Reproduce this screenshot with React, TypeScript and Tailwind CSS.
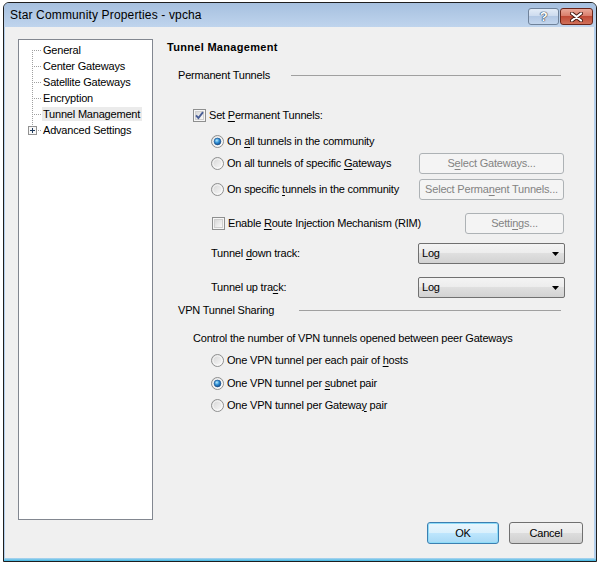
import React from "react";

const Key = ({ children }: { children: React.ReactNode }) => (
  <span className="underline underline-offset-[2px] decoration-[1px]">{children}</span>
);

const CheckBox = ({ checked }: { checked?: boolean }) => (
  <svg width="13" height="13" viewBox="0 0 13 13" className="shrink-0">
    <defs>
      <linearGradient id="cbfill" x1="0" y1="0" x2="1" y2="1">
        <stop offset="0" stopColor="#d6d6d6" />
        <stop offset="1" stopColor="#fbfbfb" />
      </linearGradient>
    </defs>
    <rect x="0.5" y="0.5" width="12" height="12" fill="#f6f6f6" stroke="#8e8f8f" />
    <rect x="2.5" y="2.5" width="8" height="8" fill="url(#cbfill)" stroke="#cfcfcf" />
    {checked && (
      <path d="M3 6.3 L5.4 9 L10 3.2" stroke="#4a5f97" strokeWidth="1.9" fill="none" />
    )}
  </svg>
);

const Radio = ({ checked }: { checked?: boolean }) => (
  <svg width="13" height="13" viewBox="0 0 13 13" className="shrink-0">
    <defs>
      <linearGradient id="rbfill" x1="0" y1="0" x2="1" y2="1">
        <stop offset="0" stopColor="#d2d2d2" />
        <stop offset="1" stopColor="#fdfdfd" />
      </linearGradient>
      <radialGradient id="rdot" cx="0.4" cy="0.35" r="0.75">
        <stop offset="0" stopColor="#b8ecff" />
        <stop offset="0.45" stopColor="#2f8fd6" />
        <stop offset="1" stopColor="#0a3b78" />
      </radialGradient>
    </defs>
    <circle cx="6.5" cy="6.5" r="6" fill="url(#rbfill)" stroke="#8e8f8f" />
    <circle cx="6.5" cy="6.5" r="4.6" fill="none" stroke="#ffffff" strokeOpacity="0.7" />
    {checked && <circle cx="6.5" cy="6.5" r="3.4" fill="url(#rdot)" stroke="#1b4f8a" strokeWidth="0.6" />}
  </svg>
);

const DisabledButton = ({ w, children }: { w: string; children: React.ReactNode }) => (
  <div
    className={`${w} h-[21px] mr-[1px] ml-auto rounded-[3px] border border-[#adb2b5] bg-[#f4f4f4] text-[#838383] flex items-center justify-center`}
  >
    {children}
  </div>
);

const Select = () => (
  <div className="ml-auto w-[147px] h-[21px] rounded-[2px] border border-[#707070] bg-[linear-gradient(#f4f4f4_0%,#ececec_50%,#dfdfdf_50%,#d2d2d2_100%)] flex items-center pl-[3px] pr-[5px]">
    <span>Log</span>
    <svg width="7" height="4" viewBox="0 0 7 4" className="ml-auto">
      <path d="M0 0 H7 L3.5 4 Z" fill="#000" />
    </svg>
  </div>
);

const treeItems = ["General", "Center Gateways", "Satellite Gateways", "Encryption", "Tunnel Management", "Advanced Settings"];

export default function App() {
  return (
    <div className="font-['Liberation_Sans',Arial,sans-serif] text-[11px] tracking-[-0.2px] text-black bg-white w-[600px] h-[565px] pt-[2px] pl-[3px]">
      <div className="w-[594px] h-[560px] border border-[#1e1e1e] rounded-t-[6px] bg-[#b4cfec] flex flex-col overflow-hidden">
        {/* title bar */}
        <div className="h-[24px] shrink-0 flex items-start pl-[6px] pr-[3px] bg-[linear-gradient(#a6c0df,#bfd4ed)]">
          <span className="text-[12px] tracking-[0.15px] leading-[16px] mt-[4px]">Star Community Properties - vpcha</span>
          <div className="ml-auto mt-[5px] flex gap-[1px]">
            <div className="w-[31px] h-[17px] rounded-[3px] border border-[#6f829a] bg-[linear-gradient(#e3ecf7_0%,#cbdaee_50%,#b3c8e4_50%,#c3d6ee_100%)] flex items-center justify-center">
              <span className="text-[13px] font-bold leading-none text-white [text-shadow:0_0_1px_#24384f,0_0_1px_#24384f,0_0_1px_#24384f]">?</span>
            </div>
            <div className="w-[33px] h-[17px] rounded-[3px] border border-[#6b2418] bg-[linear-gradient(#eaa898_0%,#d87a68_50%,#c04a36_50%,#d0705a_100%)] flex items-center justify-center">
              <svg width="13" height="10" viewBox="0 0 13 10">
                <path d="M2 1.5 L11 8.5 M11 1.5 L2 8.5" stroke="#4a1d14" strokeWidth="4" strokeLinecap="round" />
                <path d="M2 1.5 L11 8.5 M11 1.5 L2 8.5" stroke="#ffffff" strokeWidth="2.2" strokeLinecap="round" />
              </svg>
            </div>
          </div>
        </div>

        {/* client area */}
        <div className="flex-1 ml-[1px] mr-[2px] bg-[#f0f0f0] flex flex-col">
          <div className="flex pl-[13px] pt-[12px]">
            {/* tree */}
            <div className="relative w-[135px] h-[481px] shrink-0 border border-[#828790] bg-white pt-[2px]">
              <svg className="absolute left-0 top-0" width="30" height="100">
                <line x1="13.5" y1="10" x2="13.5" y2="87" stroke="#a0a0a0" strokeDasharray="1 1" />
                {[10, 26, 42, 58, 74].map((y) => (
                  <line key={y} x1="15" y1={y + 0.5} x2="23" y2={y + 0.5} stroke="#a0a0a0" strokeDasharray="1 1" />
                ))}
                <line x1="19" y1="90.5" x2="23" y2="90.5" stroke="#a0a0a0" strokeDasharray="1 1" />
                <rect x="9.5" y="86.5" width="8" height="8" fill="#f7f7f7" stroke="#919191" />
                <path d="M11 90.5 H16 M13.5 88 V93" stroke="#1f3a5c" />
              </svg>
              {treeItems.map((item) => (
                <div key={item} className="h-[16px] flex items-center pl-[23px]">
                  <span
                    className={
                      item === "Tunnel Management"
                        ? "pl-[1px] pr-[2px] h-[14px] leading-[14px] bg-[#ebebeb]"
                        : "pl-[1px] leading-[14px]"
                    }
                  >
                    {item}
                  </span>
                </div>
              ))}
            </div>

            {/* page */}
            <div className="ml-[14px] w-[398px] flex flex-col">
              <div className="h-[16px] flex items-center font-bold tracking-[0.3px]">Tunnel Management</div>

              <div className="mt-[12px] h-[16px] flex items-center pl-[11px]">
                <span>Permanent Tunnels</span>
                <div className="ml-auto mr-[4px] w-[270px] h-px bg-[#a0a0a0]" />
              </div>

              <div className="mt-[24px] h-[16px] flex items-center gap-[3px] pl-[26px]">
                <CheckBox checked />
                <span>
                  Set <Key>P</Key>ermanent Tunnels:
                </span>
              </div>

              <div className="mt-[10px] h-[16px] flex items-center gap-[3px] pl-[44px]">
                <Radio checked />
                <span>
                  On <Key>a</Key>ll tunnels in the community
                </span>
              </div>

              <div className="mt-[4px] h-[21px] flex items-center gap-[3px] pl-[44px]">
                <Radio />
                <span>
                  On all tunnels of specific <Key>G</Key>ateways
                </span>
                <DisabledButton w="w-[145px]">
                  <span>
                    S<Key>e</Key>lect Gateways...
                  </span>
                </DisabledButton>
              </div>

              <div className="mt-[5px] h-[21px] flex items-center gap-[3px] pl-[44px]">
                <Radio />
                <span>
                  On specific <Key>t</Key>unnels in the community
                </span>
                <DisabledButton w="w-[145px]">
                  <span>
                    Select Perma<Key>n</Key>ent Tunnels...
                  </span>
                </DisabledButton>
              </div>

              <div className="mt-[13px] h-[21px] flex items-center gap-[3px] pl-[45px]">
                <CheckBox />
                <span>
                  Enable <Key>R</Key>oute Injection Mechanism (RIM)
                </span>
                <DisabledButton w="w-[99px]">
                  <span>
                    Setti<Key>n</Key>gs...
                  </span>
                </DisabledButton>
              </div>

              <div className="mt-[9px] h-[21px] flex items-center pl-[44px]">
                <span>
                  Tunnel <Key>d</Key>own track:
                </span>
                <Select />
              </div>

              <div className="mt-[13px] h-[21px] flex items-center pl-[44px]">
                <span>
                  Tunnel up tra<Key>c</Key>k:
                </span>
                <Select />
              </div>

              <div className="mt-[4px] h-[16px] flex items-center pl-[11px]">
                <span>VPN Tunnel Sharing</span>
                <div className="ml-auto mr-[4px] w-[262px] h-px bg-[#a0a0a0]" />
              </div>

              <div className="mt-[12px] h-[16px] flex items-center pl-[26px]">
                Control the number of VPN tunnels opened between peer Gateways
              </div>

              <div className="mt-[6px] h-[16px] flex items-center gap-[3px] pl-[44px]">
                <Radio />
                <span>
                  One VPN tunnel per each pair of <Key>h</Key>osts
                </span>
              </div>
              <div className="mt-[7px] h-[16px] flex items-center gap-[3px] pl-[44px]">
                <Radio checked />
                <span>
                  One VPN tunnel per <Key>s</Key>ubnet pair
                </span>
              </div>
              <div className="mt-[6px] h-[16px] flex items-center gap-[3px] pl-[44px]">
                <Radio />
                <span>
                  One VPN tunnel per Gatewa<Key>y</Key> pair
                </span>
              </div>
            </div>
          </div>

          {/* buttons */}
          <div className="mt-[2px] flex justify-end gap-[10px] pr-[11px]">
            <div className="w-[72px] h-[22px] rounded-[3px] border border-[#3c7fb1] shadow-[inset_0_0_0_1px_#8fdcf8] bg-[linear-gradient(#eaf6fd_0%,#d9f0fc_50%,#bee6fd_50%,#a7d9f5_100%)] flex items-center justify-center">
              OK
            </div>
            <div className="w-[74px] h-[22px] rounded-[3px] border border-[#707070] bg-[linear-gradient(#f2f2f2_0%,#ebebeb_50%,#dddddd_50%,#cfcfcf_100%)] flex items-center justify-center">
              Cancel
            </div>
          </div>
        </div>
        <div className="h-[3px] shrink-0 bg-[linear-gradient(#b4d6f0,#3fb7e2)]" />
      </div>
    </div>
  );
}
